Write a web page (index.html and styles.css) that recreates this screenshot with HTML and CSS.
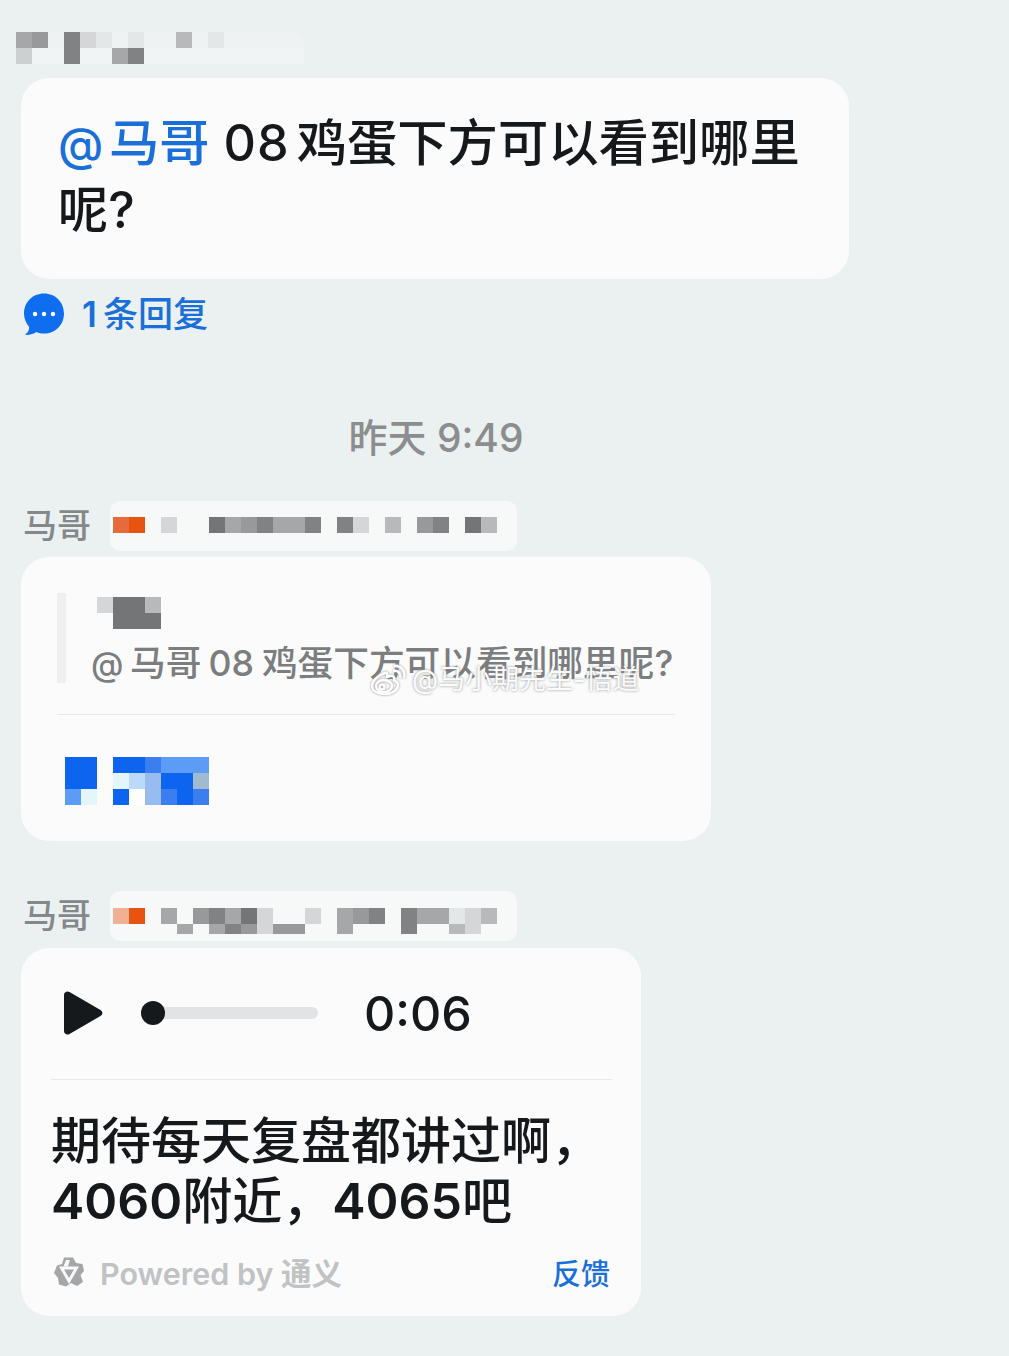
FILE: index.html

```html
<!DOCTYPE html>
<html>
<head>
  <meta charset="utf-8">
  <title>chat</title>
  <link rel="stylesheet" href="styles.css">
</head>
<body>

<div class="patch top-patch">
  <div class="mosaic cols-18">
    <i class="g3"></i><i class="g4"></i><i></i><i class="g5"></i><i class="g1"></i><i class="l2"></i><i></i><i class="l2"></i><i></i><i></i><i class="g2"></i><i></i><i class="l2"></i><i></i><i></i><i></i><i></i><i></i>
    <i class="l3"></i><i class="l4"></i><i class="l4"></i><i class="g5"></i><i class="l4"></i><i class="l4"></i><i class="g3"></i><i class="g5"></i><i class="l4"></i><i class="l4"></i><i class="l4"></i><i class="l4"></i><i class="l4"></i><i class="l4"></i><i class="l4"></i><i class="l4"></i><i class="l4"></i><i class="l4"></i>
  </div>
</div>

<div class="card first-card">
  <p class="big"><span class="mention"><span class="at">@</span>马哥</span><span class="num">08</span>鸡蛋下方可以看到哪里呢?</p>
</div>

<div class="replies">
  <svg class="chat-icon" viewBox="0 0 42 42">
    <path fill="#0f6df0" d="M21 0.500C9.600 0.500 1 9.200 1 20.500C1 25.800 3 30.400 6.200 33.900C6.300 36.500 5.200 39.300 2.600 41.100C2.200 41.500 2.500 41.900 3 41.900C7.400 41.900 11 40.700 13.400 39C15.800 40 18.300 40.600 21 40.600C32.400 40.600 41 31.800 41 20.500C41 9.200 32.400 0.500 21 0.500Z"/>
    <circle cx="12" cy="21" r="2.200" fill="#fff"/>
    <circle cx="21" cy="21" r="2.200" fill="#fff"/>
    <circle cx="30" cy="21" r="2.200" fill="#fff"/>
  </svg>
  <span><span class="one">1</span>条回复</span>
</div>

<div class="time">昨天 9:49</div>

<div class="sender first-sender">
  <span class="name">马哥</span>
  <div class="patch sender-patch">
    <div class="mosaic cols-24">
      <i class="o1"></i><i class="o2"></i><i></i><i class="g1"></i><i></i><i></i><i class="g6"></i><i class="g3"></i><i class="g4"></i><i class="g5"></i><i class="g3"></i><i class="g3"></i><i class="g5"></i><i></i><i class="g5"></i><i class="g1"></i><i></i><i class="g2"></i><i></i><i class="g4"></i><i class="g5"></i><i></i><i class="g6"></i><i class="g2"></i>
    </div>
  </div>
</div>

<div class="card quote-card">
  <div class="quote">
    <div class="mosaic cols-4 quote-name">
      <i class="g1"></i><i class="g6"></i><i class="g6"></i><i class="g2"></i>
      <i></i><i class="g6"></i><i class="g6"></i><i class="g6"></i>
    </div>
    <p class="quote-text"><span class="q-at">@</span>马哥<span class="q-num">08</span>鸡蛋下方可以看到哪里呢?</p>
  </div>
  <div class="line"></div>
  <div class="mosaic cols-9 blue-mosaic">
    <i class="b1"></i><i class="b1"></i><i></i><i class="b1"></i><i class="b1"></i><i class="b2"></i><i class="b3"></i><i class="b3"></i><i class="b3"></i>
    <i class="b1"></i><i class="b1"></i><i></i><i class="b6"></i><i class="b5"></i><i class="b4"></i><i class="b1"></i><i class="b1"></i><i class="b7"></i>
    <i class="b3"></i><i class="b6"></i><i></i><i class="b1"></i><i class="wh"></i><i class="b4"></i><i class="b2"></i><i class="b1"></i><i class="b2"></i>
  </div>
  <div class="watermark">
    <svg class="weibo" viewBox="0 0 36 32" fill="none" stroke="#fff" stroke-width="2.500">
      <path d="M15 9C8 11 2 17 2 22C2 27 8 30 15 30C22 30 28 26 28 21C28 18 25 17 24 16C25 13 23 11 20 12L17 13C18 10 17 8 15 9Z"/>
      <ellipse cx="14" cy="22" rx="8" ry="6"/>
      <circle cx="12" cy="23" r="2.500"/>
      <path d="M23 7C28 6 31 9 30 14M24 2C31 1 36 7 34 14"/>
    </svg>
    <span>@马小期先生-悟道</span>
  </div>
</div>

<div class="sender second-sender">
  <span class="name">马哥</span>
  <div class="patch sender-patch">
    <div class="mosaic cols-24 clipped">
      <i class="o3"></i><i class="o2"></i><i></i><i class="g3"></i><i></i><i class="g4"></i><i class="g5"></i><i class="g3"></i><i class="g6"></i><i class="g1"></i><i></i><i></i><i class="g1"></i><i></i><i class="g3"></i><i class="g4"></i><i class="g5"></i><i></i><i class="g5"></i><i class="g3"></i><i class="g3"></i><i class="l2"></i><i class="g1"></i><i class="g2"></i>
      <i></i><i></i><i></i><i></i><i class="g3"></i><i></i><i class="g3"></i><i class="g5"></i><i class="g4"></i><i class="g1"></i><i class="g4"></i><i class="g4"></i><i></i><i></i><i class="g3"></i><i></i><i></i><i></i><i class="g5"></i><i></i><i></i><i class="g2"></i><i class="g1"></i><i></i>
    </div>
  </div>
</div>

<div class="card voice-card">
  <div class="player">
    <svg class="play" viewBox="0 0 40 44">
      <path fill="#16191c" d="M1 4C1 1 4 -0.500 6.500 1L37.500 19C40 20.500 40 23.500 37.500 25L6.500 43C4 44.500 1 43 1 40Z"/>
    </svg>
    <div class="track"><div class="thumb"></div></div>
    <span class="duration">0:06</span>
  </div>
  <div class="line voice-line"></div>
  <p class="result">期待每天复盘都讲过啊，<br><span class="digits">4060</span>附近，<span class="digits">4065</span>吧</p>
  <div class="foot">
    <svg class="logo" viewBox="0 0 30 30">
      <path fill="#a4a6a8" d="M10 0.500L19 0.500L22 6L28.500 7L30 14L26.500 18L29 25L23 29L17 26L12 29.500L5 27.500L4 21L0 16L3 8.500L8 7Z"/>
      <path fill="#fafafa" fill-rule="evenodd" d="M5 9.500L25 9.500L15 27ZM10 12.500L15 21L20 12.500Z"/>
      <path fill="#fafafa" d="M12 3L16 3L14 9.500L9.500 9.500Z"/>
      <path fill="#a4a6a8" d="M11.500 13.500L18.500 13.500L15 19.500Z"/>
    </svg>
    <span class="powered">Powered by 通义</span>
    <span class="feedback">反馈</span>
  </div>
</div>

</body>
</html>
```

FILE: styles.css

```css
body { margin:0; padding:32px 0 0 21px; height:1324px; overflow:hidden; background:#ebf0f1; color:#16191c; font-family:"Inter","Noto Sans CJK SC",sans-serif; }
p { margin:0 }

.mosaic { display:grid; grid-auto-rows:16px; }
.mosaic i { display:block }
.cols-4 { grid-template-columns:repeat(4,16px) }
.cols-9 { grid-template-columns:repeat(9,16px) }
.cols-18 { grid-template-columns:repeat(18,16px) }
.cols-24 { grid-template-columns:repeat(24,16px) }
.clipped { height:26px; overflow:hidden; }

.g1 { background:#d4d6d8 }
.g2 { background:#b8b9bb }
.g3 { background:#a5a7a8 }
.g4 { background:#97999b }
.g5 { background:#808284 }
.g6 { background:#747577 }
.l2 { background:#e4e7e7 }
.l3 { background:#ccd0d1 }
.l4 { background:#f1f4f4 }
.o1 { background:#e66a3a }
.o2 { background:#e8540f }
.o3 { background:#f0b094 }
.b1 { background:#0d64ee }
.b2 { background:#3a7eef }
.b3 { background:#5c9bf6 }
.b4 { background:#98bbf0 }
.b5 { background:#bcd8fb }
.b6 { background:#e4f6fa }
.b7 { background:#a0bbd0 }
.wh { background:#fff }

.patch { background:#f7f9f9; border-radius:10px; }
.top-patch { width:288px; height:33px; margin-left:-5px; background:#eef2f3; }

.card { background:#fbfbfb; border-radius:28px; box-sizing:border-box; }
.first-card { width:828px; margin-top:13px; padding:32px 40px 36px 37px; }
.big { font-size:50.300px; line-height:66px; font-weight:500; }
.mention { color:#1a6fd8 }
.at { display:inline-block; width:51px; font-size:46px; }
.num { margin:0 7px 0 14px; letter-spacing:1px; }

.replies { display:flex; align-items:center; gap:17px; margin:14px 0 0 2px; font-size:35px; line-height:42px; font-weight:500; color:#1a6fd8; }
.chat-icon { width:42px; height:42px; }
.one { display:inline-block; width:21px; font-weight:600; }

.time { width:830px; margin-top:80px; text-align:center; font-size:39px; line-height:46px; font-weight:500; color:#8b8d8f; }

.sender { display:flex; align-items:flex-start; margin-left:2px; }
.first-sender { margin-top:40px; height:56px; }
.second-sender { margin-top:50px; height:57px; }
.name { width:87px; font-size:34px; line-height:50px; font-weight:500; color:#85888a; }
.sender-patch { width:407px; height:50px; padding:16px 0 0 3px; box-sizing:border-box; overflow:hidden; }
.second-sender .sender-patch { padding-top:17px; }

.quote-card { position:relative; width:690px; height:284px; padding:36px 36px 0; }
.quote { display:flex; flex-direction:column; height:90px; padding-left:34px; border-left:9px solid #efefef; box-sizing:border-box; margin-bottom:31px; }
.quote-name { margin:4px 0 0 -3px; }
.quote-text { margin:12px 0 0 -9px; white-space:nowrap; font-size:35.700px; line-height:44px; font-weight:500; color:#7b7d7f; }
.q-at { display:inline-block; width:39px; font-size:33px; }
.q-num { margin:0 8px 0 7px; }
.line { height:1px; background:#e8e9ea; }
.blue-mosaic { margin:42px 0 0 8px; }

.watermark { position:absolute; left:349px; top:107px; display:flex; align-items:center; gap:6px; font-size:27px; line-height:32px; color:#fbfbfb; text-shadow:0 0 3px #8f9193; }
.weibo { width:36px; height:32px; filter:drop-shadow(0 0 1px #8f9193); }

.voice-card { width:620px; height:368px; padding:43px 30px 0; }
.player { display:flex; align-items:center; height:44px; padding-left:12px; }
.play { width:40px; height:44px; }
.track { position:relative; width:177px; height:12px; margin-left:38px; border-radius:6px; background:#e2e3e5; }
.thumb { position:absolute; left:0; top:-6px; width:24px; height:24px; border-radius:50%; background:#16191c; }
.duration { margin-left:46px; font-size:48.500px; font-weight:500; }
.voice-line { margin-top:44px; width:561px; }
.result { margin-top:31px; font-size:50px; line-height:60px; font-weight:500; white-space:nowrap; }
.digits { font-weight:600; }
.foot { display:flex; align-items:center; margin-top:21px; padding-left:3px; height:40px; }
.logo { width:30px; height:30px; }
.powered { margin-left:16px; font-size:30.500px; font-weight:600; color:#c0c2c3; }
.feedback { margin-left:auto; margin-right:1px; font-size:29px; font-weight:500; color:#1a6fd8; }
```
